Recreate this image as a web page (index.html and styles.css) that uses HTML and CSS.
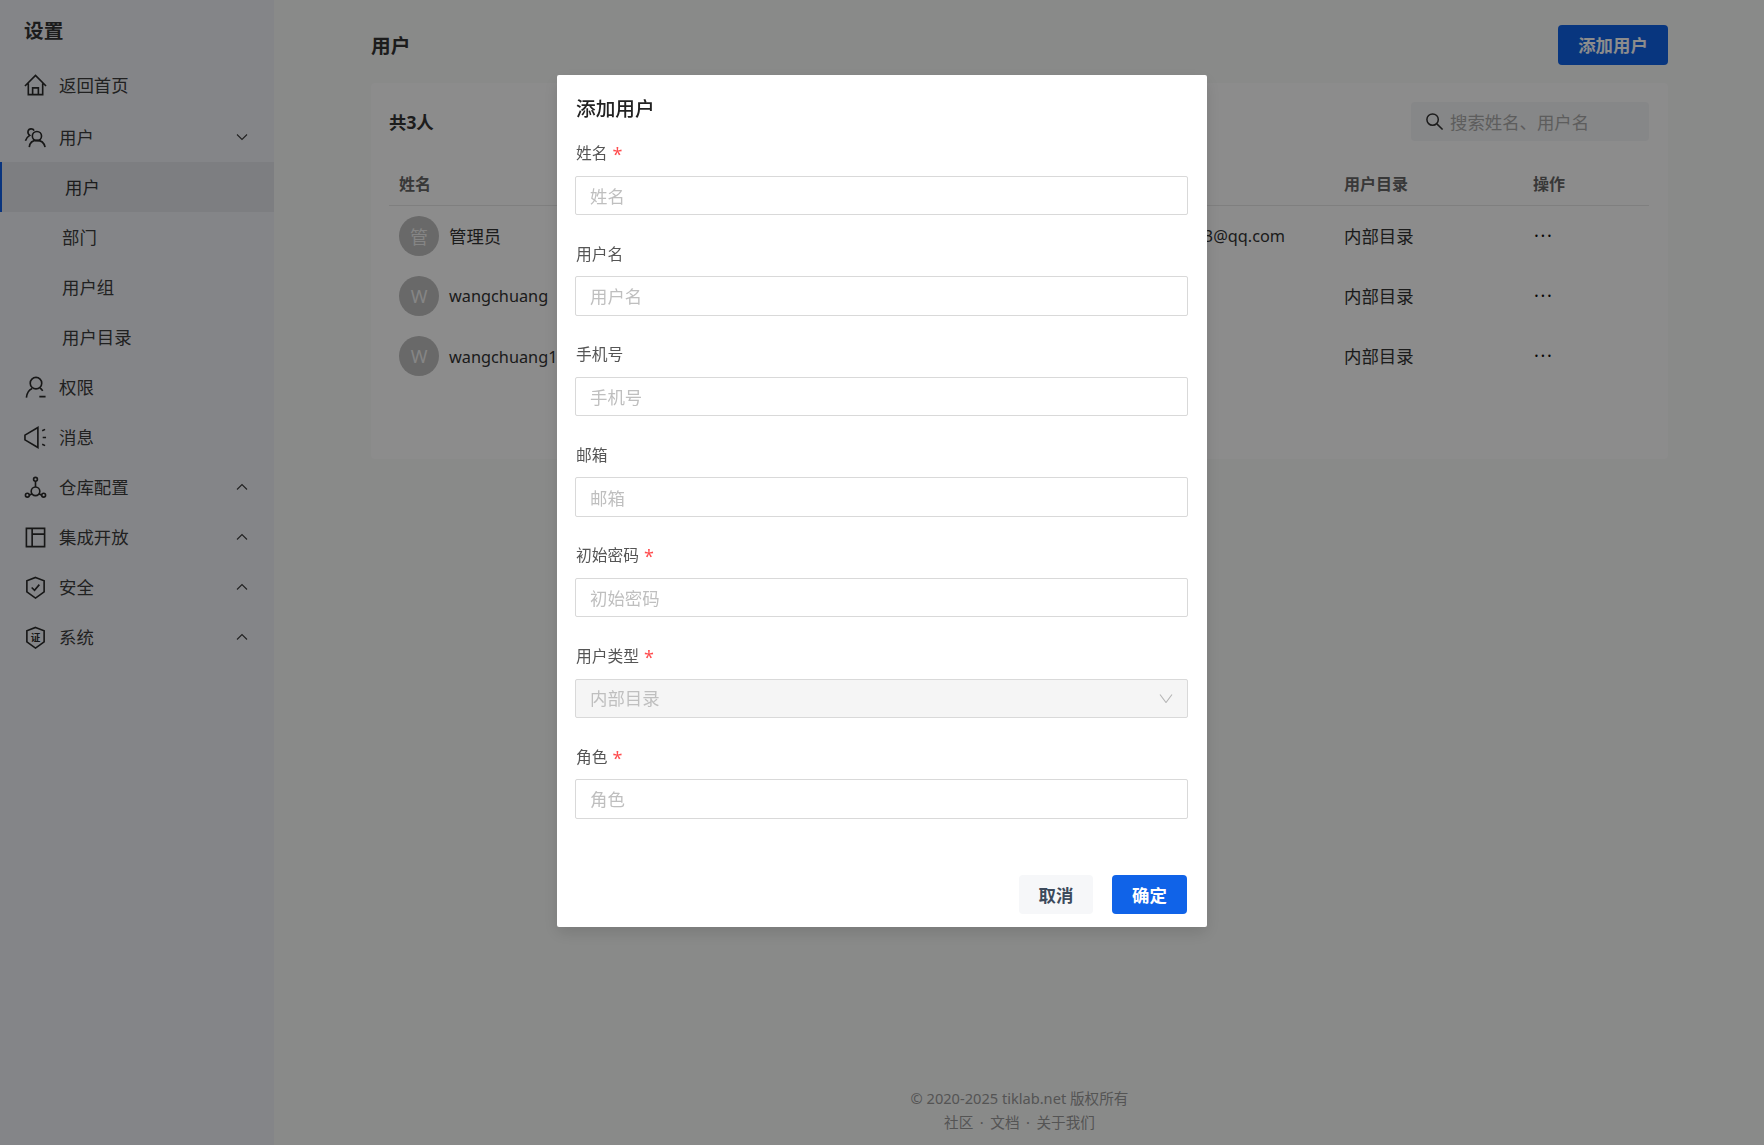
FILE: index.html
```html
<!DOCTYPE html>
<html>
<head>
    <title>用户</title>
    <link rel="stylesheet" href="styles.css">
</head>
<body>
    <div class="layout">
        <aside class="sidebar">
            <div class="sidebar-title">设置</div>
            <div class="nav-item nav-home">
                <svg class="nav-icon" viewBox="0 0 24 24"><path d="M1 12.500 12 1.500l11 11M4.500 10v11.500h15V10M9 21.500V14.500h6v7"/></svg>
                <span>返回首页</span>
            </div>
            <div class="nav-item">
                <svg class="nav-icon" viewBox="0 0 24 24"><circle cx="13.500" cy="10.500" r="4.800"/><path d="M5.500 22c.5-4.500 3.800-7 8-7s7.500 2.500 8.500 7M10.500 4.800C9.500 2.500 5 2.200 4.200 5.500c-.4 1.800.4 3.300 1.800 4.300C3.800 11 2.300 13 1.500 15.500"/></svg>
                <span>用户</span>
                <svg class="nav-arrow" viewBox="0 0 12 8"><path d="M1 1.500 6 6.500l5-5"/></svg>
            </div>
            <div class="nav-sub active">用户</div>
            <div class="nav-sub">部门</div>
            <div class="nav-sub">用户组</div>
            <div class="nav-sub">用户目录</div>
            <div class="nav-item">
                <svg class="nav-icon" viewBox="0 0 24 24"><ellipse cx="12.500" cy="7.500" rx="6" ry="6"/><path d="M8.500 13c-3.500 1.500-5.500 5-6 9.500M16.500 12.500c1.200.7 2.200 1.700 3 3M16 21.500h6.500"/></svg>
                <span>权限</span>
            </div>
            <div class="nav-item">
                <svg class="nav-icon" viewBox="0 0 24 24"><path d="M1 9.500 14.500 1.500v21L1 14.500zM19 5l3-1.500M19.500 12H23M19 19l3 1.500"/></svg>
                <span>消息</span>
            </div>
            <div class="nav-item">
                <svg class="nav-icon" viewBox="0 0 24 24"><circle cx="12" cy="3.500" r="2"/><circle cx="3.500" cy="20" r="2"/><circle cx="20.500" cy="20" r="2"/><circle cx="12" cy="16" r="4.500"/><path d="M12 5.500v6M5.500 20l3-1.500M18.500 20l-3-1.500"/></svg>
                <span>仓库配置</span>
                <svg class="nav-arrow" viewBox="0 0 12 8"><path d="M1 6.500 6 1.500l5 5"/></svg>
            </div>
            <div class="nav-item">
                <svg class="nav-icon" viewBox="0 0 24 24"><path d="M2.500 2.500h19v19h-19zM8.500 2.500v19M8.500 8.500h13"/></svg>
                <span>集成开放</span>
                <svg class="nav-arrow" viewBox="0 0 12 8"><path d="M1 6.500 6 1.500l5 5"/></svg>
            </div>
            <div class="nav-item">
                <svg class="nav-icon" viewBox="0 0 24 24"><path d="M12 1.500 21 5v11.500L12 23 3 16.500V5zM8 12l3 3 5-6"/></svg>
                <span>安全</span>
                <svg class="nav-arrow" viewBox="0 0 12 8"><path d="M1 6.500 6 1.500l5 5"/></svg>
            </div>
            <div class="nav-item">
                <svg class="nav-icon" viewBox="0 0 24 24"><path d="M12 1.500 21 5v11.500L12 23 3 16.500V5z"/><text class="nav-icon-text" x="12" y="15.500">证</text></svg>
                <span>系统</span>
                <svg class="nav-arrow" viewBox="0 0 12 8"><path d="M1 6.500 6 1.500l5 5"/></svg>
            </div>
        </aside>
        <main class="main">
            <div class="page-head">
                <h2>用户</h2>
                <button class="btn btn-primary">添加用户</button>
            </div>
            <div class="card">
                <div class="card-head">
                    <span class="count">共3人</span>
                    <div class="search">
                        <svg viewBox="0 0 20 20"><circle cx="8" cy="8" r="6"/><path d="m12.500 12.500 6 6"/></svg>
                        <span>搜索姓名、用户名</span>
                    </div>
                </div>
                <table class="user-table">
                    <thead>
                        <tr>
                            <th class="col-name">姓名</th>
                            <th class="col-login">用户名</th>
                            <th class="col-phone">手机号</th>
                            <th class="col-mail">邮箱</th>
                            <th class="col-dir">用户目录</th>
                            <th>操作</th>
                        </tr>
                    </thead>
                    <tbody>
                        <tr>
                            <td><div class="user-cell"><span class="avatar">管</span>管理员</div></td>
                            <td class="latin">admin</td>
                            <td></td>
                            <td class="latin">2541623853@qq.com</td>
                            <td>内部目录</td>
                            <td class="more">···</td>
                        </tr>
                        <tr>
                            <td><div class="user-cell latin"><span class="avatar">W</span>wangchuang</div></td>
                            <td class="latin">wangchuang</td>
                            <td></td>
                            <td></td>
                            <td>内部目录</td>
                            <td class="more">···</td>
                        </tr>
                        <tr>
                            <td><div class="user-cell latin"><span class="avatar">W</span><span class="name-last">wangchuang1</span></div></td>
                            <td class="latin">wangchuang1</td>
                            <td></td>
                            <td></td>
                            <td>内部目录</td>
                            <td class="more">···</td>
                        </tr>
                    </tbody>
                </table>
            </div>
            <footer class="page-foot">
                <div>© 2020-2025 tiklab.net 版权所有</div>
                <div class="foot-links"><span>社区</span><span class="dot">·</span><span>文档</span><span class="dot">·</span><span>关于我们</span></div>
            </footer>
        </main>
    </div>

    <div class="mask">
        <div class="modal">
            <div class="modal-title">添加用户</div>
            <div class="field">
                <label class="required">姓名</label>
                <input type="text" placeholder="姓名">
            </div>
            <div class="field">
                <label>用户名</label>
                <input type="text" placeholder="用户名">
            </div>
            <div class="field">
                <label>手机号</label>
                <input type="text" placeholder="手机号">
            </div>
            <div class="field">
                <label>邮箱</label>
                <input type="text" placeholder="邮箱">
            </div>
            <div class="field">
                <label class="required">初始密码</label>
                <input type="text" placeholder="初始密码">
            </div>
            <div class="field">
                <label class="required">用户类型</label>
                <div class="select-disabled">
                    <span>内部目录</span>
                    <svg viewBox="0 0 14 9"><path d="M1 .5l6 8 6-8"/></svg>
                </div>
            </div>
            <div class="field">
                <label class="required">角色</label>
                <input type="text" placeholder="角色">
            </div>
            <div class="modal-foot">
                <button class="btn btn-plain">取消</button>
                <button class="btn btn-primary">确定</button>
            </div>
        </div>
    </div>
</body>
</html>
```

FILE: styles.css
```css
* {
    box-sizing: border-box;
}

body {
    margin: 0;
    font-family: "Noto Sans", "Noto Sans CJK SC", sans-serif;
    font-size: 17.4px;
    color: #333;
    background: #fff;
}

.layout {
    display: flex;
    height: 100vh;
    overflow: hidden;
}

.sidebar {
    width: 274px;
    flex-shrink: 0;
    background: #f1f3f8;
    color: #3c3c3c;
}

.sidebar-title {
    height: 60px;
    padding: 17px 24px 0;
    font-size: 19.7px;
    font-weight: 700;
    line-height: 28px;
    color: #333;
}

.nav-item {
    display: flex;
    align-items: center;
    height: 50px;
    padding: 0 26px 0 24px;
}

.nav-home {
    height: 52px;
}

.nav-home svg {
    margin-top: -1px;
}

.nav-item span {
    flex: 1;
    margin: -2px 0 0 12px;
}

.nav-home span {
    margin-top: -4px;
}

.nav-icon {
    width: 23px;
    height: 23px;
    fill: none;
    stroke: #2a2a2a;
    stroke-width: 1.7;
}

.nav-icon-text {
    font-size: 10px;
    fill: #2a2a2a;
    stroke: none;
    text-anchor: middle;
    font-weight: 700;
}

.nav-arrow {
    width: 12px;
    height: 8px;
    fill: none;
    stroke: #3c3c3c;
    stroke-width: 1.1;
}

.nav-sub {
    height: 50px;
    padding-left: 62px;
    line-height: 50px;
}

.nav-sub.active {
    padding-left: 63px;
    border-left: 2px solid #1160e6;
    background: #e3e6ec;
    color: #333;
}

.main {
    flex: 1;
    display: flex;
    flex-direction: column;
    padding: 0 96px 0 97px;
    background: #f9fbf9;
}

.page-head {
    display: flex;
    align-items: center;
    justify-content: space-between;
    height: 83px;
    padding: 7px 0 0;
}

.page-head h2 {
    margin: 0 0 2px;
    font-size: 19.7px;
    font-weight: 700;
    color: #333;
}

.btn {
    height: 39px;
    border: 0;
    border-radius: 4px;
    font-family: inherit;
    font-size: 17.4px;
    font-weight: 700;
}

.btn-primary {
    width: 75px;
    background: #1063e8;
    color: #fff;
}

.page-head .btn-primary {
    width: 110px;
    height: 40px;
    padding-bottom: 3px;
}

.btn-plain {
    width: 74px;
    background: #f6f7f9;
    color: #3d4a5c;
}

.card {
    height: 376px;
    padding: 19px 19px 0 18px;
    background: #fff;
    border-radius: 4px;
}

.card-head {
    display: flex;
    align-items: center;
    justify-content: space-between;
    height: 39px;
    margin-bottom: 22px;
}

.count {
    font-weight: 700;
    color: #333;
}

.search {
    display: flex;
    align-items: center;
    width: 238px;
    height: 39px;
    padding-left: 14px;
    background: #f5f6f7;
    border-radius: 4px;
    color: #aaa;
}

.search svg {
    width: 19px;
    height: 19px;
    margin-right: 6px;
    fill: none;
    stroke: #333;
    stroke-width: 1.6;
}

.user-table {
    width: 100%;
    border-collapse: collapse;
    table-layout: fixed;
}

.user-table th {
    height: 42px;
    padding: 0 10px 2px;
    border-bottom: 1px solid #e8e8e8;
    font-size: 16px;
    font-weight: 700;
    text-align: left;
    color: #666;
}

.user-table td {
    height: 60px;
    padding: 0 10px;
    white-space: nowrap;
    overflow: hidden;
}

.col-name {
    width: 240px;
}

.col-login {
    width: 240px;
}

.col-phone {
    width: 241px;
}

.col-mail {
    width: 224px;
}

.col-dir {
    width: 189px;
}

.user-cell {
    display: flex;
    align-items: center;
    gap: 10px;
    padding-top: 1px;
}

.latin {
    font-size: 16.3px;
}

.user-table td.latin {
    padding-top: 2px;
}

.name-last {
    padding-top: 2px;
}

.avatar {
    display: flex;
    align-items: center;
    justify-content: center;
    width: 40px;
    height: 40px;
    border-radius: 50%;
    background: #bfbfbf;
    color: #f2f2f2;
    font-size: 18px;
}

.user-table td.more {
    padding-left: 11px;
    color: #111;
    font-size: 18px;
    letter-spacing: 1.7px;
}

.page-foot {
    margin-top: auto;
    padding-bottom: 11px;
    font-size: 14.625px;
    line-height: 24px;
    text-align: center;
    color: #999;
}

.foot-links {
    display: flex;
    justify-content: center;
}

.dot {
    width: 17px;
}

.mask {
    position: fixed;
    inset: 0;
    background: rgba(0, 0, 0, 0.45);
}

.modal {
    width: 650px;
    height: 852px;
    margin: 75px 0 0 557px;
    padding: 21px 19px 0 18px;
    background: #fff;
    border-radius: 2px;
    box-shadow: 0 6px 16px rgba(0, 0, 0, 0.12);
}

.modal-title {
    height: 26px;
    margin-left: 1px;
    margin-bottom: 15px;
    font-size: 19.7px;
    font-weight: 500;
    line-height: 26px;
    color: #222;
}

.field {
    height: 100.6px;
}

.field label {
    display: block;
    height: 32px;
    margin-left: 1px;
    margin-bottom: 6.7px;
    font-size: 15.75px;
    line-height: 32px;
    color: #555;
}

.field label.required::after {
    content: "*";
    margin-left: 5px;
    font-size: 18px;
    line-height: 0;
    vertical-align: -2px;
    color: #ff4d4f;
}

.field input {
    display: block;
    width: 100%;
    height: 39.4px;
    padding: 1px 14px 0;
    border: 1px solid #d9d9d9;
    border-radius: 2px;
    font-family: inherit;
    font-size: 17.4px;
    outline: none;
}

.field input::placeholder {
    color: #bfbfbf;
}

.select-disabled {
    display: flex;
    align-items: center;
    justify-content: space-between;
    height: 39.4px;
    padding: 0 14px;
    border: 1px solid #d9d9d9;
    border-radius: 2px;
    background: #f5f5f5;
    color: #bfbfbf;
}

.select-disabled span {
    margin-top: -2px;
}

.select-disabled svg {
    width: 14px;
    height: 9px;
    fill: none;
    stroke: #b5b5b5;
    stroke-width: 1.1;
}

.modal-foot {
    display: flex;
    justify-content: flex-end;
    gap: 19px;
    margin-top: 34px;
    padding-right: 1px;
}
```
